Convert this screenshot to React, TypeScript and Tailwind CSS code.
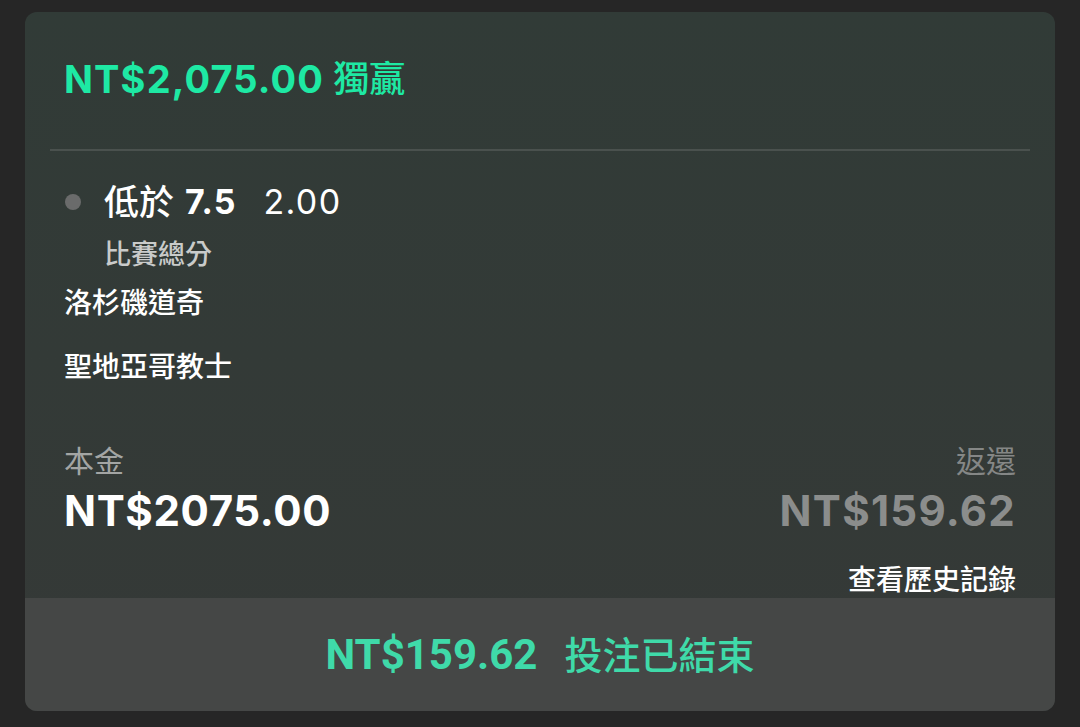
const cjk = '"Inter", "Noto Sans CJK TC", sans-serif';
const roboto = '"Roboto", "Noto Sans CJK TC", sans-serif';

export default function App() {
  return (
    <div
      className="w-[1080px] h-[727px] bg-[#262626] pt-[12px] px-[25px] overflow-hidden"
      style={{ fontFamily: cjk }}
    >
      <div className="w-[1030px] h-[699px] rounded-[12px] overflow-hidden flex flex-col bg-gradient-to-b from-[#313b37] to-[#353937]">
        {/* header */}
        <div className="h-[134px] flex items-center pl-[39px] shrink-0">
          <span className="text-[38px] font-bold tracking-[0.03em] text-[#1ee9a4] leading-none">
            NT$2,075.00
          </span>
          <span className="ml-[9px] text-[36px] font-medium text-[#1ee9a4] leading-none">
            獨贏
          </span>
        </div>
        <div className="mx-[25px] mt-[3px] h-[2px] bg-[#4a514e] shrink-0" />

        {/* bet details */}
        <div className="flex-1 flex flex-col px-[39px] text-white">
          <div className="mt-[31px] h-[40px] flex items-center">
            <span className="w-[16px] h-[16px] rounded-full bg-[#6a6b6b] ml-[1px]" />
            <span className="ml-[23px] text-[35px] font-medium leading-none">低於</span>
            <span className="ml-[11px] text-[34px] font-bold tracking-[0.03em] leading-none">7.5</span>
            <span className="ml-[27px] text-[34px] tracking-[0.04em] leading-none">2.00</span>
          </div>
          <div className="mt-[16px] h-[34px] flex items-center pl-[40px] text-[27px] font-medium text-[#c9cbca]">
            比賽總分
          </div>
          <div className="mt-[13px] h-[36px] flex items-center text-[28px] font-medium">
            洛杉磯道奇
          </div>
          <div className="mt-[28px] h-[36px] flex items-center text-[28px] font-medium">
            聖地亞哥教士
          </div>

          <div className="mt-[58px] flex justify-between">
            <div className="flex flex-col">
              <span className="h-[36px] flex items-center text-[30px] text-[#a3a5a4]">本金</span>
              <span className="mt-[7px] h-[48px] flex items-center text-[42px] font-bold tracking-[0.015em]">
                NT$2075.00
              </span>
            </div>
            <div className="flex flex-col items-end">
              <span className="h-[36px] flex items-center text-[30px] text-[#858786]">返還</span>
              <span className="mt-[7px] h-[48px] flex items-center text-[42px] font-bold tracking-[0.03em] text-[#8b8d8c]">
                NT$159.62
              </span>
              <span className="mt-[28px] h-[36px] flex items-center text-[28px] font-medium">查看歷史記錄</span>
            </div>
          </div>
        </div>

        {/* footer */}
        <div className="h-[114px] shrink-0 bg-[#454746] flex items-center justify-center text-[#3fdaa9]">
          <span className="text-[42px] font-bold leading-none" style={{ fontFamily: roboto }}>
            NT$159.62
          </span>
          <span className="ml-[27px] text-[38px] font-medium leading-none">投注已結束</span>
        </div>
      </div>
    </div>
  );
}
